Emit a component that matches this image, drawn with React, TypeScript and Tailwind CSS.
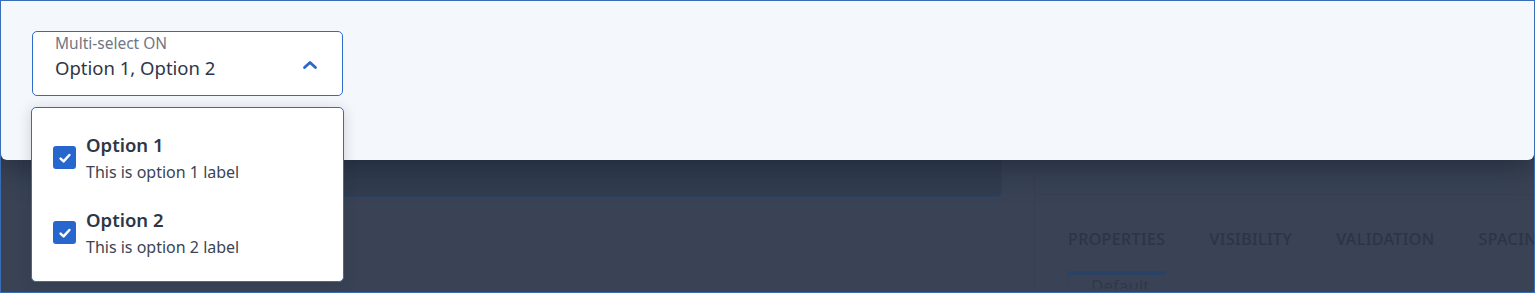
import React from 'react'

const font = { fontFamily: '"Noto Sans", "Open Sans", Arial, sans-serif' }

const options = [
  { title: 'Option 1', label: 'This is option 1 label' },
  { title: 'Option 2', label: 'This is option 2 label' },
]

function Check() {
  return (
    <span className="flex h-[23px] w-[23px] shrink-0 items-center justify-center rounded-[3px] bg-[#2766cc]">
      <svg width="16" height="16" viewBox="0 0 16 16" fill="none">
        <path d="M3.6 8.6l3 2.8L12.4 5" stroke="#fff" strokeWidth="2.5" strokeLinecap="round" strokeLinejoin="round" />
      </svg>
    </span>
  )
}

export default function App() {
  return (
    <div className="relative h-[293px] w-[1535px] overflow-hidden border border-[#3b6db6] bg-[#394355]" style={font}>
      {/* page behind the overlay */}
      <div className="flex h-full">
        <div className="w-[1034px] shrink-0 border-r border-[#364052] pt-[120px] pl-[40px] pr-[32px]">
          <div className="h-[76px] rounded-b-[5px] border border-[#2c4262] bg-[#323d4f]" />
        </div>
        <div className="flex-1 pt-[32px]">
          <div className="h-[162px] border-b border-[#364052]" />
          <div className="flex gap-[44px] pl-[33px] pt-[33px] text-[16px] font-medium leading-[22px] tracking-[0.4px] text-[#2b3545]">
            <span>PROPERTIES</span>
            <span>VISIBILITY</span>
            <span>VALIDATION</span>
            <span>SPACING</span>
          </div>
          <div className="ml-[33px] mt-[21px] h-[4px] w-[98px] bg-[#2a4364]" />
          <div className="ml-[33px] h-[14px] overflow-hidden border-l border-[#344056] pl-[22px] text-[17px] leading-[22px] text-[#2e394a]">Default</div>
        </div>
      </div>

      {/* overlay panel */}
      <div className="absolute left-0 right-0 top-0 h-[159px] rounded-b-[6px] bg-[#f4f7fb] shadow-[0_6px_30px_rgba(20,28,42,0.6)]">
        <div className="ml-[31px] mt-[30px] flex h-[65px] w-[311px] items-start justify-between rounded-[5px] border border-[#2f6bcb] bg-white pl-[22px] pr-[24px] pt-[1px]">
          <div className="flex flex-col">
            <span className="text-[15.5px] leading-[20px] text-[#6f7784]">Multi-select ON</span>
            <span className="mt-[2px] text-[18.5px] leading-[25px] text-[#2d3748]">Option 1, Option 2</span>
          </div>
          <svg className="mt-[27px]" width="16" height="10" viewBox="0 0 16 10" fill="none">
            <path d="M2.5 7.5L8 2.5l5.5 5" stroke="#2b67c9" strokeWidth="2.8" strokeLinecap="round" strokeLinejoin="round" />
          </svg>
        </div>
      </div>

      {/* dropdown */}
      <div className="absolute left-[30px] top-[106px] flex w-[313px] flex-col gap-[24px] rounded-[5px] border border-[#2f6bcb] bg-white px-[21px] pb-[23px] pt-[24px] shadow-[0_2px_14px_rgba(30,40,60,0.18)]">
        {options.map((o) => (
          <div key={o.title} className="flex items-center gap-[10px]">
            <Check />
            <div className="flex flex-col">
              <span className="text-[18.5px] font-semibold leading-[25px] text-[#2d3748]">{o.title}</span>
              <span className="mt-[4px] text-[16px] leading-[22px] text-[#3b4453]">{o.label}</span>
            </div>
          </div>
        ))}
      </div>
    </div>
  )
}
